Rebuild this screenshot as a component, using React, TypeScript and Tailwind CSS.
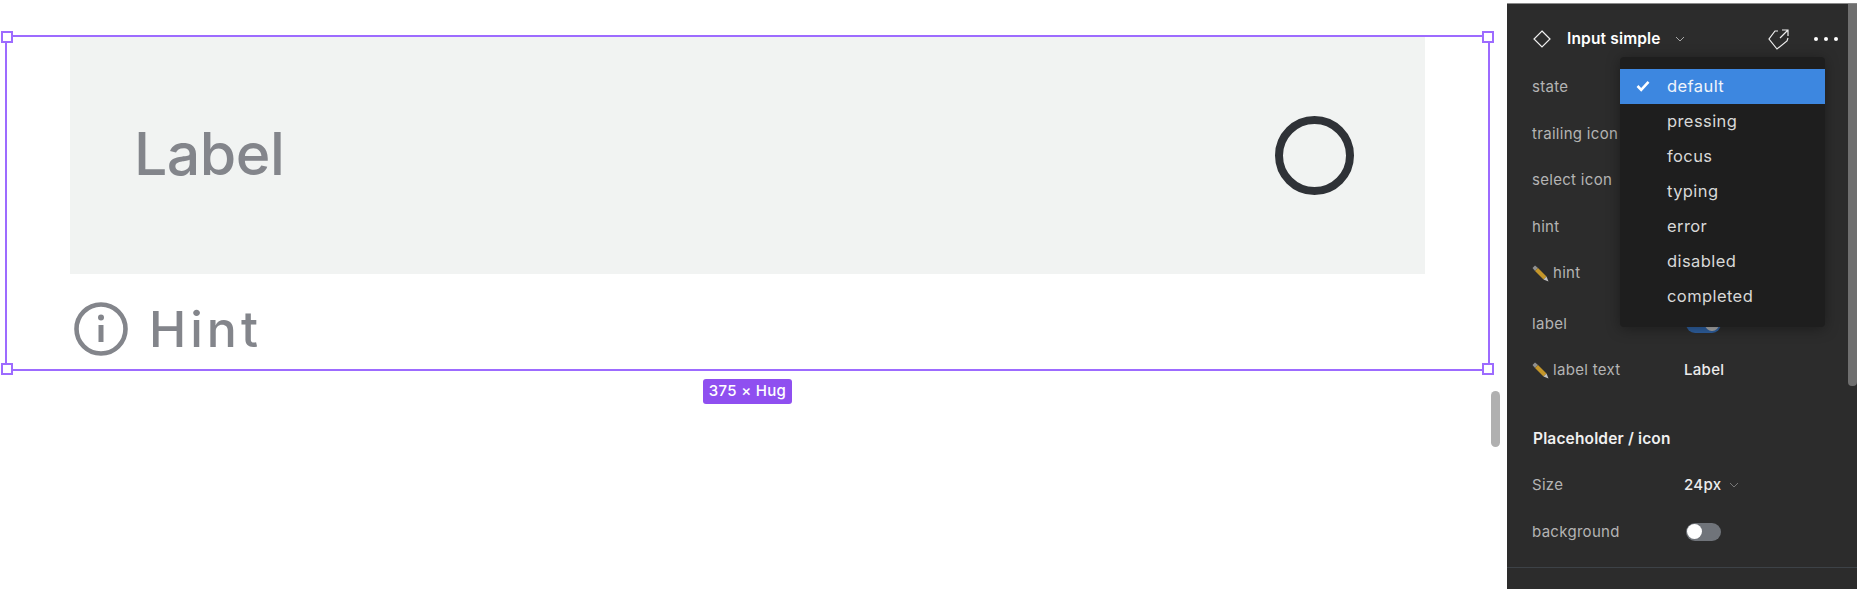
const font = { fontFamily: "Inter, 'Liberation Sans', sans-serif" };

const states = ["default", "pressing", "focus", "typing", "error", "disabled", "completed"];

function Handle({ className }: { className: string }) {
  return <div className={`absolute h-[12px] w-[12px] border-2 border-[#9d6bff] bg-white ${className}`} />;
}

function Pencil() {
  return (
    <svg width="17" height="17" viewBox="0 0 17 17" className="shrink-0">
      <path d="M0.5 3 L3 0.5 L6 3 L3 6 Z" fill="#8f8f8f" />
      <path d="M3 6 L6 3 L14.5 11.5 L11.5 14.5 Z" fill="#c4962a" />
      <path d="M11.5 14.5 L14.5 11.5 L16.5 16.5 Z" fill="#c2c2c2" />
    </svg>
  );
}

function Chevron({ color = "#a8a8a8" }: { color?: string }) {
  return (
    <svg width="10" height="6" viewBox="0 0 10 6" fill="none">
      <path d="M1 1 L5 5 L9 1" stroke={color} strokeWidth="1" />
    </svg>
  );
}

function Row({ label, pencil, className = "", children }: { label: string; pencil?: boolean; className?: string; children?: React.ReactNode }) {
  return (
    <div className={`flex h-[46.5px] items-center ${className}`}>
      <div className="flex w-[152px] items-center gap-[4px] text-[15px] tracking-[0.02em] text-[#b4b4b4]">
        {pencil && <Pencil />}
        <span>{label}</span>
      </div>
      {children}
    </div>
  );
}

function Toggle({ on }: { on?: boolean }) {
  return on ? (
    <div className="ml-[2px] flex h-[18px] w-[35px] items-center justify-end rounded-full bg-[#2e5f9e] px-[2px]">
      <div className="h-[14px] w-[14px] rounded-full bg-[#a8a8a8]" />
    </div>
  ) : (
    <div className="ml-[2px] flex h-[18px] w-[35px] items-center rounded-full bg-[#70747a] px-[1px]">
      <div className="h-[15px] w-[15px] rounded-full bg-white" />
    </div>
  );
}

export default function App() {
  return (
    <div style={font} className="flex h-[589px] w-[1857px] overflow-hidden bg-white">
      {/* canvas */}
      <div className="relative w-[1507px] shrink-0 pl-[5px] pt-[35px]">
        <div className="relative h-[336px] w-[1485px] border-2 border-[#9d6bff]">
          <div className="ml-[63px] flex h-[237px] w-[1355px] items-center justify-between bg-[#f1f3f2] pl-[64px] pr-[71px]">
            <span className="-mt-[4px] text-[59px] font-medium leading-none tracking-[-0.5px] text-[#83858b]">Label</span>
            <div className="h-[79px] w-[79px] rounded-full border-[8px] border-[#2f3237]" />
          </div>
          <div className="ml-[67px] flex h-[95px] items-center gap-[21px] pt-[14px]">
            <svg width="54" height="54" viewBox="0 0 54 54" fill="none">
              <circle cx="27" cy="27" r="24.5" stroke="#83858b" strokeWidth="4.6" />
              <rect x="24.5" y="23" width="5" height="17" fill="#83858b" />
              <circle cx="27" cy="15.5" r="3" fill="#83858b" />
            </svg>
            <span className="text-[50px] font-medium leading-none tracking-[4px] text-[#83858b]">Hint</span>
          </div>
          <Handle className="-left-[6px] -top-[6px]" />
          <Handle className="-right-[6px] -top-[6px]" />
          <Handle className="-left-[6px] -bottom-[6px]" />
          <Handle className="-right-[6px] -bottom-[6px]" />
        </div>
        <div className="absolute left-[703px] top-[379px] flex h-[25px] w-[89px] items-center justify-center rounded-[3px] bg-[#8f4ff0] text-[15px] font-medium tracking-[0.02em] text-white">
          375 × Hug
        </div>
        <div className="absolute left-[1491px] top-[391px] h-[56px] w-[9px] rounded-full bg-[#b0b0b0]" />
      </div>

      {/* properties panel */}
      <div className="relative mt-[3px] flex-1 border-t border-[#8a8a8a] bg-[#2c2c2c] pl-[25px] pr-[9px]">
        <div className="absolute right-0 top-0 h-[382px] w-[9px] rounded-b-[4px] bg-[#6f6f6f]" />

        <div className="flex h-[70px] items-center">
          <svg width="20" height="20" viewBox="0 0 20 20" fill="none">
            <path d="M10 2 L18 10 L10 18 L2 10 Z" stroke="#f0f0f0" strokeWidth="1.2" />
          </svg>
          <span className="ml-[15px] text-[15.5px] font-semibold tracking-[0.01em] text-white">Input simple</span>
          <span className="ml-[14px]"><Chevron /></span>
          <svg width="24" height="24" viewBox="0 0 24 24" fill="none" className="ml-[82px]">
            <path d="M11 4 L8 4 L2 12 L10 22 L20 14 L21 11" stroke="#f0f0f0" strokeWidth="1.2" />
            <path d="M13 11 L21 3 M15 3 H21 V9" stroke="#f0f0f0" strokeWidth="1.2" />
          </svg>
          <div className="ml-[23px] flex gap-[6px]">
            <div className="h-[4px] w-[4px] rounded-full bg-white" />
            <div className="h-[4px] w-[4px] rounded-full bg-white" />
            <div className="h-[4px] w-[4px] rounded-full bg-white" />
          </div>
        </div>

        <div className="-mt-[10px]">
          <Row label="state" />
          <Row label="trailing icon" />
          <Row label="select icon" />
          <Row label="hint" />
          <Row label="hint" pencil />
          <Row label="label" className="mt-[4px]"><Toggle on /></Row>
          <Row label="label text" pencil>
            <span className="text-[15px] font-[450] tracking-[0.02em] text-[#ececec]">Label</span>
          </Row>
        </div>

        <div className="ml-[1px] mt-[33.5px] text-[15.5px] font-semibold tracking-[0.01em] leading-[24px] text-[#f0f0f0]">Placeholder / icon</div>
        <div className="mt-[11px]">
          <Row label="Size">
            <span className="text-[15px] font-[450] tracking-[0.02em] text-[#ececec]">24px</span>
            <span className="ml-[8px]"><Chevron color="#777" /></span>
          </Row>
          <Row label="background"><Toggle /></Row>
        </div>
        <div className="absolute bottom-[21px] left-0 right-0 h-px bg-[#3d4247]" />

        {/* state dropdown */}
        <div className="absolute left-[113px] top-[53px] h-[270px] w-[205px] rounded-[4px] bg-[#1e1e1e] pt-[11.5px] shadow-[0_2px_14px_rgba(0,0,0,0.35)]">
          {states.map((s, i) => (
            <div key={s} className={`flex h-[35px] items-center text-[16.5px] tracking-[0.025em] ${i === 0 ? "bg-[#3d87e0] text-[#f0f4fb]" : "text-[#d8d8d8]"}`}>
              <span className="flex w-[47px] justify-end pr-[17px]">
                {i === 0 && (
                  <svg width="14" height="12" viewBox="0 0 14 12" fill="none">
                    <path d="M1.5 6 L5.2 9.8 L12.5 1.8" stroke="#fff" strokeWidth="2.6" />
                  </svg>
                )}
              </span>
              {s}
            </div>
          ))}
        </div>
      </div>
    </div>
  );
}
